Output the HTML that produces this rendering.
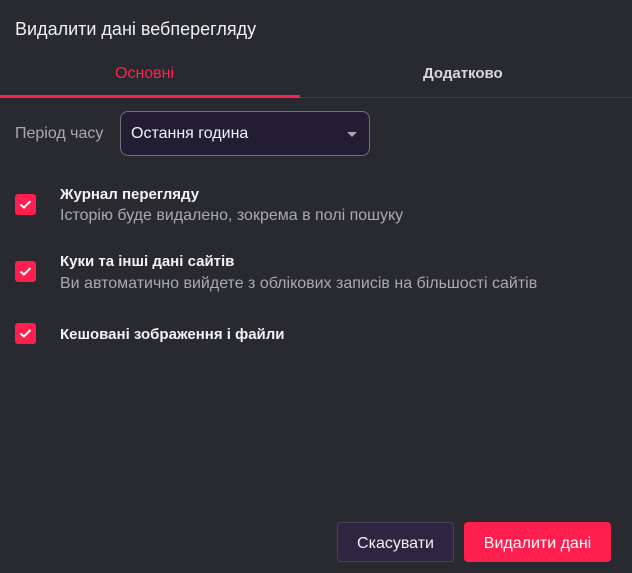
<!DOCTYPE html>
<html><head><meta charset="utf-8"><style>
*{margin:0;padding:0;box-sizing:border-box}
body{width:632px;height:573px;background:#292a2f;font-family:"Liberation Sans","DejaVu Sans",sans-serif;color:#f2f2f4;position:relative;overflow:hidden}
.a{position:absolute;white-space:nowrap}
.cb{position:absolute;left:15px;width:21px;height:21px;background:#ff1f4f;border-radius:3px}
.cb svg{position:absolute;left:4px;top:5px}
.t{font-size:15px;font-weight:bold;color:#f2f2f4}
.s{font-size:16px;color:#a9a9ae}
</style></head><body>
<div class="a" style="left:15px;top:19px;font-size:18px;color:#f0f0f2">Видалити дані вебперегляду</div>
<div class="a" style="left:115px;top:65px;font-size:16px;color:#ff2050">Основні</div>
<div class="a" style="left:423px;top:65px;font-size:15px;color:#d8d8dc;font-weight:bold">Додатково</div>
<div class="a" style="left:0;top:97px;width:632px;height:1px;background:#3d3e44"></div>
<div class="a" style="left:0;top:95px;width:300px;height:3px;background:#ff1f4f"></div>
<div class="a s" style="left:15px;top:125px">Період часу</div>
<div class="a" style="left:120px;top:111px;width:250px;height:45px;background:#221d33;border:1px solid #727078;border-radius:8px"></div>
<div class="a" style="left:131px;top:125px;font-size:16px;color:#f2f2f4">Остання година</div>
<div class="a" style="left:347px;top:132px;width:0;height:0;border-left:5px solid transparent;border-right:5px solid transparent;border-top:5px solid #a9a9ae"></div>

<div class="cb" style="top:194px"><svg width="13" height="11" viewBox="0 0 13 11"><path d="M1.5 5.5L5 8.5L11.5 2" stroke="#fff" stroke-width="2" fill="none"/></svg></div>
<div class="a t" style="left:60px;top:186px">Журнал перегляду</div>
<div class="a s" style="left:60px;top:207px">Історію буде видалено, зокрема в полі пошуку</div>

<div class="cb" style="top:261px"><svg width="13" height="11" viewBox="0 0 13 11"><path d="M1.5 5.5L5 8.5L11.5 2" stroke="#fff" stroke-width="2" fill="none"/></svg></div>
<div class="a t" style="left:60px;top:253px">Куки та інші дані сайтів</div>
<div class="a s" style="left:60px;top:275px">Ви автоматично вийдете з облікових записів на більшості сайтів</div>

<div class="cb" style="top:323px"><svg width="13" height="11" viewBox="0 0 13 11"><path d="M1.5 5.5L5 8.5L11.5 2" stroke="#fff" stroke-width="2" fill="none"/></svg></div>
<div class="a t" style="left:60px;top:326px">Кешовані зображення і файли</div>

<div class="a" style="left:337px;top:522px;width:117px;height:40px;background:#2e2640;border:1px solid #4a4160;border-radius:4px;font-size:16px;color:#f0f0f2;text-align:center;line-height:42px">Скасувати</div>
<div class="a" style="left:464px;top:522px;width:147px;height:40px;background:#ff1f4f;border-radius:4px;font-size:16px;color:#fff;text-align:center;line-height:44px">Видалити дані</div>
</body></html>
